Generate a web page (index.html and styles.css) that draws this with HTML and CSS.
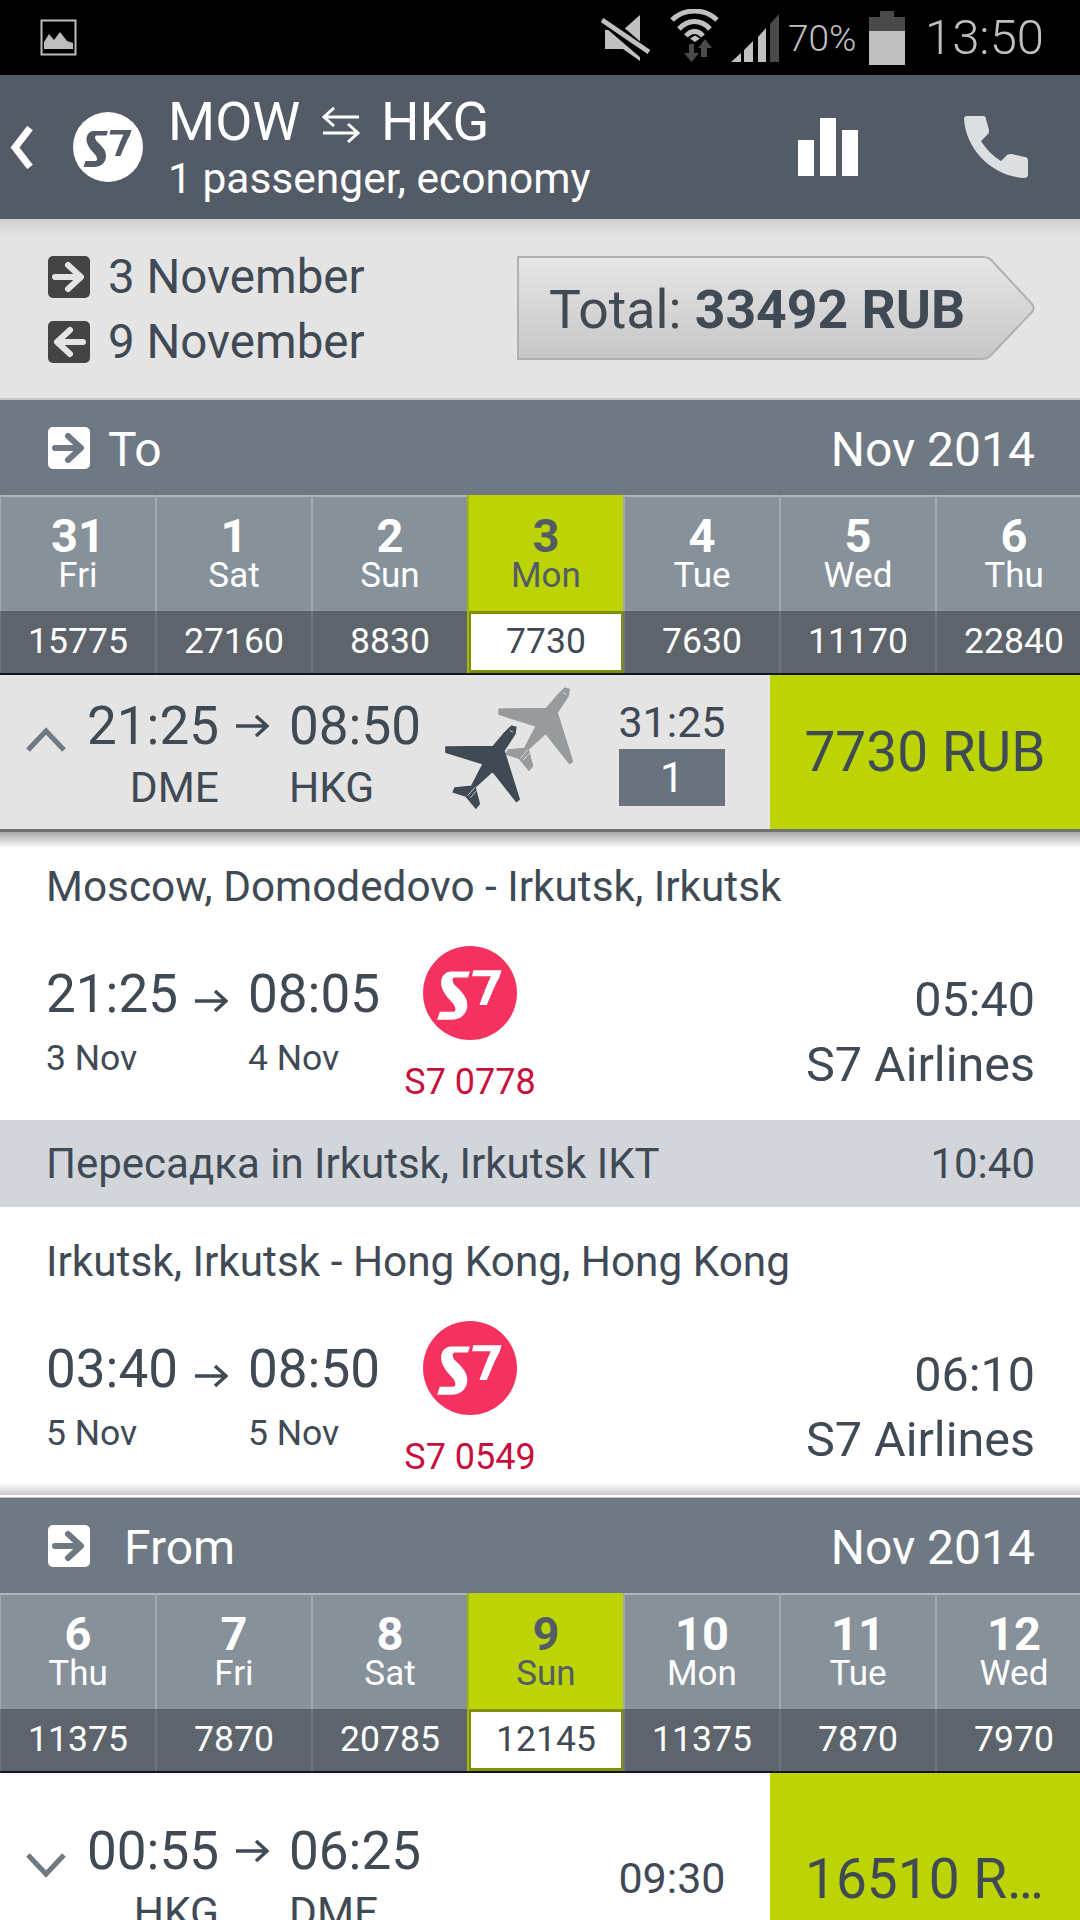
FILE: index.html
```html
<!DOCTYPE html>
<html lang="en">
<head>
    <meta charset="UTF-8">
    <title>MOW - HKG</title>
    <link rel="stylesheet" href="styles.css">
</head>
<body>
<svg class="defs" width="0" height="0">
    <symbol id="s7" viewBox="0 0 70 70">
        <path d="M20.500 19H35L33.500 23.500H24C22.500 23.500 21.700 24.500 22.200 26C22.500 27.500 23 28.500 24 29.500C28 33.500 33 37.500 33 44C33 50.500 28 55 21 55H10.500L12.500 49H22C23.500 49 24.500 48 24 46.500C23.800 45 23 43.500 22 42.500C18.500 38.500 15 35 13.800 30C12.500 24 15.500 19.500 20.500 19Z"/>
        <path d="M37.500 18H58.500L57 23C53.500 29 50.500 37 47.500 44H42C44.500 37 47.500 29 50.500 22.500H36.500Z"/>
    </symbol>
    <symbol id="go-right" viewBox="0 0 42 42">
        <rect width="42" height="42" rx="5" fill="currentColor"/>
        <path d="M7 21H32M20 9L33 21L20 33" fill="none" stroke="var(--mark)" stroke-width="6" stroke-linecap="round" stroke-linejoin="round"/>
    </symbol>
    <symbol id="go-left" viewBox="0 0 42 42">
        <rect width="42" height="42" rx="5" fill="currentColor"/>
        <path d="M35 21H10M22 9L9 21L22 33" fill="none" stroke="var(--mark)" stroke-width="6" stroke-linecap="round" stroke-linejoin="round"/>
    </symbol>
    <symbol id="thin-arrow" viewBox="0 0 34 24">
        <path d="M1 12H31M21 2L32 12L21 22" fill="none" stroke="currentColor" stroke-width="3.500"/>
    </symbol>
</svg>

<div class="wrapper">
    <div class="status-bar">
        <svg class="st-image" width="37" height="37" viewBox="0 0 37 37">
            <path d="M1.500 1.500H35.500V35.500H1.500Z" fill="none" stroke="#bdbdbd" stroke-width="2"/>
            <path d="M4 30V23L9 15L14 21L20 13L27 22L33 24V30Z" fill="#bdbdbd"/>
        </svg>
        <div class="st-right">
            <svg width="49" height="47" viewBox="0 0 49 47">
                <path d="M22 16L39 1V47L22 35H4V16Z" fill="#c0c0c0"/>
                <path d="M-2 0L48 43" stroke="#000" stroke-width="12"/>
                <path d="M1 6L48 38" stroke="#c0c0c0" stroke-width="5"/>
            </svg>
            <svg class="st-wifi" width="50" height="54" viewBox="0 0 50 54">
                <path d="M2 11C14 -1 35 -1 47 11M9 20C18 10 31 10 40 20M16 27C21 21 28 21 33 27" fill="none" stroke="#c0c0c0" stroke-width="5"/>
                <path d="M20 29.500L25 26.500L30 29.500L25 33Z" fill="#c0c0c0"/>
                <path d="M19 35H24V44H29L21.500 53L14 44H19Z" fill="#4a4a4a"/>
                <path d="M31 48V39H28L35 30L42 39H37V48Z" fill="#4a4a4a"/>
            </svg>
            <svg width="49" height="48" viewBox="0 0 49 48">
                <path d="M0 48L10 39V48Z M13 48V36L22 27V48Z M27 48V23L35 14V48Z" fill="#c0c0c0"/>
                <path d="M39 48V10L48 0V48Z" fill="#4a4a4a"/>
            </svg>
            <span class="st-percent">70%</span>
            <svg width="36" height="54" viewBox="0 0 36 54">
                <path d="M0 6H11V0H25V6H36V20H0Z" fill="#4a4a4a"/>
                <path d="M0 20H36V54H0Z" fill="#c0c0c0"/>
            </svg>
            <span class="st-clock">13:50</span>
        </div>
    </div>

    <div class="app-header">
        <svg class="back" width="24" height="43" viewBox="0 0 24 43">
            <path d="M20 2L5 21.500L20 41" fill="none" stroke="#fff" stroke-width="7"/>
        </svg>
        <svg class="logo-white" width="70" height="70"><use href="#s7"/></svg>
        <div class="app-title">
            <div class="route">MOW <svg width="40" height="36" viewBox="0 0 40 36"><path d="M38 10H4M13 1L3 10L13 19M2 26H36M27 17L37 26L27 35" fill="none" stroke="#fff" stroke-width="3"/></svg> HKG</div>
            <div class="pax">1 passenger, economy</div>
        </div>
        <svg class="bars" width="60" height="58" viewBox="0 0 60 58">
            <path d="M0 22H16V58H0Z M22 0H38V58H22Z M44 12H60V58H44Z" fill="#fff"/>
        </svg>
        <svg class="phone" width="64" height="62" viewBox="0 0 64 62">
            <path d="M3 0H19C21 0 22 1 22 3L25 14C25 16 25 17 24 18L17 25C22 33 29 40 37 45L43 39C44 38 46 38 48 38L61 41C63 41 64 43 64 45V59C64 61 62 62 60 62C28 60 2 34 0 3C0 1 1 0 3 0Z" fill="#dcdee0"/>
        </svg>
    </div>

    <div class="summary">
        <div class="summary-dates">
            <div class="date-line"><svg class="dir dir-dark" width="42" height="42"><use href="#go-right"/></svg>3 November</div>
            <div class="date-line"><svg class="dir dir-dark" width="42" height="42"><use href="#go-left"/></svg>9 November</div>
        </div>
        <div class="total">
            <svg class="total-bg" width="518" height="104" viewBox="0 0 518 104">
                <defs>
                    <linearGradient id="totalfill" x1="0" y1="0" x2="0" y2="1">
                        <stop offset="0" stop-color="#e6e6e6"/>
                        <stop offset="1" stop-color="#c6c6c6"/>
                    </linearGradient>
                </defs>
                <path d="M1 1H466C471 1 474 3 477 7L515 48C517 50 517 54 515 56L477 96C474 100 471 103 466 103H1Z" fill="url(#totalfill)" stroke="#aeb0b2" stroke-width="2"/>
            </svg>
            <span class="total-text">Total: <b>33492 RUB</b></span>
        </div>
    </div>

    <div class="dir-bar">
        <span class="dir-label"><svg class="dir dir-light" width="42" height="44"><use href="#go-right"/></svg>To</span>
        <span>Nov 2014</span>
    </div>
    <div class="days">
        <div class="day"><b>31</b><span>Fri</span><i>15775</i></div>
        <div class="day"><b>1</b><span>Sat</span><i>27160</i></div>
        <div class="day"><b>2</b><span>Sun</span><i>8830</i></div>
        <div class="day day-on"><b>3</b><span>Mon</span><i>7730</i></div>
        <div class="day"><b>4</b><span>Tue</span><i>7630</i></div>
        <div class="day"><b>5</b><span>Wed</span><i>11170</i></div>
        <div class="day"><b>6</b><span>Thu</span><i>22840</i></div>
    </div>

    <div class="flight flight-open">
        <svg class="chev" width="40" height="25" viewBox="0 0 40 25">
            <path d="M2 23L20 4L38 23" fill="none" stroke="#6f7983" stroke-width="5"/>
        </svg>
        <div class="times flight-times">
            <span class="t">21:25</span><svg class="arr" width="34" height="24"><use href="#thin-arrow"/></svg><span class="t">08:50</span>
            <span class="port">DME</span><span></span><span class="port">HKG</span>
        </div>
        <svg class="planes" width="128" height="122" viewBox="45 35 385 365">
            <defs>
                <g id="plane">
                    <path class="plane-shape" d="M245 152L258 155L255 175L222 225L268 372L260 378L188 287L135 335L148 385L138 398L108 362L70 350L75 338L125 333L160 265L48 230L48 215L190 213L225 172Z"/>
                    <path d="M112 362L135 336M120 368L141 345M240 165L250 170" fill="none" stroke="#e4e4e4" stroke-width="2.500"/>
                </g>
            </defs>
            <use href="#plane" class="plane-back" transform="translate(160 -114)"/>
            <use href="#plane" class="plane-front"/>
        </svg>
        <div class="dur">
            <span>31:25</span>
            <span class="stops">1</span>
        </div>
        <div class="price">7730 RUB</div>
    </div>

    <div class="leg leg-first">
        <div class="leg-title">Moscow, Domodedovo - Irkutsk, Irkutsk</div>
        <div class="leg-body">
            <div class="times leg-times">
                <span class="t">21:25</span><svg class="arr" width="34" height="24"><use href="#thin-arrow"/></svg><span class="t">08:05</span>
                <span class="d">3 Nov</span><span></span><span class="d">4 Nov</span>
            </div>
            <div class="carrier">
                <svg class="logo-red" width="94" height="94"><use href="#s7"/></svg>
                <span>S7 0778</span>
            </div>
            <div class="leg-right">
                <span>05:40</span>
                <span>S7 Airlines</span>
            </div>
        </div>
    </div>
    <div class="stopover">
        <span>Пересадка in Irkutsk, Irkutsk IKT</span>
        <span>10:40</span>
    </div>
    <div class="leg leg-last">
        <div class="leg-title">Irkutsk, Irkutsk - Hong Kong, Hong Kong</div>
        <div class="leg-body">
            <div class="times leg-times">
                <span class="t">03:40</span><svg class="arr" width="34" height="24"><use href="#thin-arrow"/></svg><span class="t">08:50</span>
                <span class="d">5 Nov</span><span></span><span class="d">5 Nov</span>
            </div>
            <div class="carrier">
                <svg class="logo-red" width="94" height="94"><use href="#s7"/></svg>
                <span>S7 0549</span>
            </div>
            <div class="leg-right">
                <span>06:10</span>
                <span>S7 Airlines</span>
            </div>
        </div>
    </div>

    <div class="dir-bar dir-bar-back">
        <span class="dir-label"><svg class="dir dir-light" width="42" height="44"><use href="#go-right"/></svg>From</span>
        <span>Nov 2014</span>
    </div>
    <div class="days">
        <div class="day"><b>6</b><span>Thu</span><i>11375</i></div>
        <div class="day"><b>7</b><span>Fri</span><i>7870</i></div>
        <div class="day"><b>8</b><span>Sat</span><i>20785</i></div>
        <div class="day day-on"><b>9</b><span>Sun</span><i>12145</i></div>
        <div class="day"><b>10</b><span>Mon</span><i>11375</i></div>
        <div class="day"><b>11</b><span>Tue</span><i>7870</i></div>
        <div class="day"><b>12</b><span>Wed</span><i>7970</i></div>
    </div>

    <div class="flight flight-closed">
        <svg class="chev" width="40" height="25" viewBox="0 0 40 25">
            <path d="M2 2L20 21L38 2" fill="none" stroke="#6f7983" stroke-width="5"/>
        </svg>
        <div class="times flight-times">
            <span class="t">00:55</span><svg class="arr" width="34" height="24"><use href="#thin-arrow"/></svg><span class="t">06:25</span>
            <span class="port">HKG</span><span></span><span class="port">DME</span>
        </div>
        <div class="dur">
            <span>09:30</span>
        </div>
        <div class="price"><span class="price-cut">16510 RUB</span></div>
    </div>
</div>
</body>
</html>
```

FILE: styles.css
```css
* {
    box-sizing: border-box;
}

html, body {
    margin: 0;
    padding: 0;
    background: #fff;
}

body {
    font-family: Roboto, "Noto Sans CJK SC", sans-serif;
    color: #3f4a55;
    height: 1920px;
    overflow: hidden;
}

.defs {
    position: absolute;
}

.wrapper {
    width: 1080px;
    height: 1920px;
    overflow: hidden;
}

/* status bar */
.status-bar {
    height: 75px;
    background: #000;
    display: flex;
    align-items: center;
    justify-content: space-between;
    padding: 0 36px 0 40px;
}

.st-right {
    display: flex;
    align-items: center;
    color: #c0c0c0;
    font-weight: 300;
}

.st-wifi {
    margin: -4px 11px 0 20px;
}

.st-percent {
    font-size: 37px;
    margin: 2px 15px 0 8px;
    width: 66px;
    white-space: nowrap;
}

.st-clock {
    font-size: 49px;
    margin-left: 20px;
}

/* header */
.app-header {
    height: 144px;
    background: #535b66;
    display: flex;
    align-items: center;
    padding: 0 52px 0 10px;
    color: #fff;
}

.back {
    flex: none;
    margin-right: 39px;
}

.logo-white {
    flex: none;
    background: #fff;
    border-radius: 50%;
    fill: #535b66;
    margin-right: 25px;
}

.app-title {
    flex: 1;
    align-self: flex-start;
    padding-top: 17px;
}

.route {
    font-size: 54px;
    line-height: 60px;
    margin-bottom: 2px;
}

.route svg {
    margin: 0 7px;
    vertical-align: -3px;
}

.pax {
    font-size: 42.500px;
    line-height: 50px;
}

.bars {
    margin-right: 106px;
}

/* selected dates and total */
.summary {
    height: 181px;
    background: linear-gradient(#cfcfcf, #e4e4e4 16px);
    border-bottom: 2px solid #c6c8ca;
    display: flex;
    align-items: center;
    justify-content: space-between;
    padding: 0 45px 0 48px;
}

.summary-dates {
    display: flex;
    flex-direction: column;
    gap: 21px;
    margin-top: 1px;
}

.date-line {
    display: flex;
    align-items: center;
    font-size: 47.500px;
    line-height: 44px;
}

.dir {
    flex: none;
    margin-right: 18px;
}

.dir-dark {
    color: #444;
    --mark: #e4e4e4;
}

.dir-light {
    color: #fff;
    --mark: #6f7983;
}

.total {
    position: relative;
    width: 518px;
    height: 104px;
    display: flex;
    align-items: center;
    padding: 4px 0 0 32px;
    margin-top: -2px;
}

.total-bg {
    position: absolute;
    left: 0;
    top: 0;
}

.total-text {
    position: relative;
    font-size: 53.500px;
}

.total-text b {
    font-weight: 700;
}

/* to / from bar */
.dir-bar {
    height: 95px;
    background: #6f7983;
    color: #fff;
    display: flex;
    align-items: center;
    justify-content: space-between;
    padding: 4px 45px 0 48px;
    font-size: 48px;
}

.dir-label {
    display: flex;
    align-items: center;
}

.dir-label svg {
    margin-top: -4px;
}

.dir-bar-back .dir {
    margin-right: 34px;
}

/* calendar strip */
.days {
    display: grid;
    grid-template-columns: repeat(7, 156px);
    height: 180px;
    overflow: hidden;
    background: #10171e;
    padding-bottom: 2px;
    margin-left: -1px;
    width: 1081px;
}

.day {
    display: flex;
    flex-direction: column;
    align-items: center;
    background: linear-gradient(#b0b6bc 2px, #87919a 2px);
    color: #fff;
    border-left: 2px solid #a1a8af;
    height: 178px;
}

.day b {
    font-size: 47px;
    line-height: 42px;
    margin-top: 20px;
}

.day span {
    font-size: 35px;
    line-height: 38px;
}

.day i {
    font-style: normal;
    font-size: 35.500px;
    align-self: stretch;
    margin: auto 0 0 -2px;
    height: 62px;
    line-height: 60px;
    text-align: center;
    background: #5d646c;
    border-left: 2px solid #6e757c;
}

.day-on {
    background: #bcd404;
    border-left: 2px solid #a3b50b;
    color: #535b66;
}

.day-on i {
    margin-left: 0;
    border: 2px solid #7f8f0a;
    border-top-width: 3px;
    border-bottom-width: 3px;
    background: #fff;
    line-height: 54px;
    color: #3f4a55;
}

/* flight rows */
.flight {
    display: flex;
    align-items: flex-start;
    position: relative;
}

.flight-open {
    height: 154px;
    background: #e4e4e4;
}

.flight-closed {
    height: 216px;
    background: #fff;
    padding-top: 27px;
}

.chev {
    flex: none;
    margin: 52px 21px 0 26px;
}

.flight-closed .chev {
    margin-top: 53px;
}

.times {
    display: grid;
    grid-template-columns: 148px 54px auto;
    flex: none;
}

.flight-times {
    margin-top: 20px;
    width: 358px;
}

.t {
    font-size: 53px;
    line-height: 62px;
}

.arr {
    align-self: center;
    color: #3f4a55;
}

.port {
    font-size: 42.500px;
    line-height: 46px;
    margin-top: 8px;
}

.flight-times .port:nth-child(4) {
    text-align: right;
    padding-right: 16px;
}

.planes {
    flex: none;
    margin-top: 12px;
}

.plane-shape {
    stroke-width: 5;
    stroke-linejoin: round;
}

.plane-back {
    fill: #979b9e;
    stroke: #979b9e;
}

.plane-front {
    fill: #3f4a55;
    stroke: #3f4a55;
}

.dur {
    position: absolute;
    left: 619px;
    top: 24px;
    width: 106px;
    display: flex;
    flex-direction: column;
    align-items: center;
    font-size: 43px;
    line-height: 46px;
}

.flight-closed .dur {
    top: 82px;
}

.stops {
    align-self: stretch;
    text-align: center;
    margin-top: 4px;
    height: 57px;
    line-height: 57px;
    background: #68737e;
    color: #fff;
}

.price {
    position: absolute;
    left: 770px;
    top: 0;
    right: 0;
    bottom: 0;
    background: #bcd404;
    display: flex;
    align-items: center;
    justify-content: center;
    font-size: 55px;
}

.flight-closed .price {
    padding-bottom: 4px;
}

.price-cut {
    display: block;
    width: 240px;
    overflow: hidden;
    white-space: nowrap;
    text-overflow: ellipsis;
}

/* flight details */
.leg {
    height: 291px;
    padding: 0 45px 0 46px;
}

.leg-first {
    background: linear-gradient(#6f7174 3px, #a8a8a8 3px, #fff 19px);
    padding-top: 3px;
}

.leg-last {
    background: linear-gradient(#fff 276px, #c8c8c8 288px, #fff 288px, #fff 290px, #c0c4c8 290px);
}

.leg-title {
    padding-top: 30px;
    font-size: 42.300px;
    line-height: 50px;
    white-space: nowrap;
}

.leg-body {
    display: flex;
    position: relative;
}

.leg-times {
    margin-top: 51px;
}

.d {
    font-size: 35.500px;
    line-height: 40px;
}

.carrier {
    position: absolute;
    left: 339px;
    top: 34px;
    width: 170px;
    display: flex;
    flex-direction: column;
    align-items: center;
    color: #c8103e;
    font-size: 36px;
    line-height: 40px;
}

.carrier span {
    margin-top: 22px;
}

.logo-red {
    background: #f5325f;
    border-radius: 50%;
    fill: #fff;
}

.leg-right {
    margin-left: auto;
    margin-top: 62px;
    display: flex;
    flex-direction: column;
    align-items: flex-end;
    gap: 13px;
    font-size: 48.500px;
    line-height: 52px;
}

.stopover {
    height: 87px;
    background: #d2d5d9;
    display: flex;
    align-items: center;
    justify-content: space-between;
    padding: 0 45px 0 46px;
    font-size: 42px;
}
```
